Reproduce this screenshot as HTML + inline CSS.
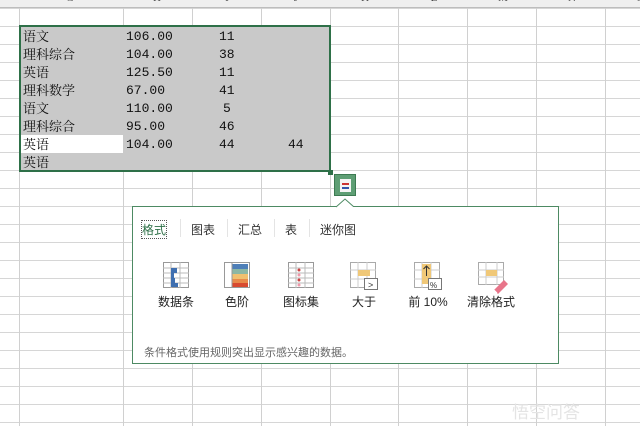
<!DOCTYPE html><html><head><meta charset="utf-8"><style>
*{margin:0;padding:0;box-sizing:border-box}
body{width:640px;height:426px;overflow:hidden;background:#fff;position:relative;font-family:"Liberation Sans","Noto Sans CJK SC",sans-serif}
.grid{position:absolute;left:0;top:8px;width:640px;height:418px;
background-image:linear-gradient(to bottom,#d6d6d6 1px,transparent 1px);background-size:100% 18px}
.v{position:absolute;top:0;width:1px;height:426px;background:#d0d0d0}
.hdr{position:absolute;left:0;top:0;width:640px;height:8px;background:#efefef;border-bottom:1px solid #bdbdbd;overflow:hidden}
.hdr span{position:absolute;top:-8px;font:11px "Liberation Serif",serif;color:#444;width:20px;text-align:center}
.sel{position:absolute;left:19px;top:25px;width:312px;height:147px;background:#c9c9c9;border:2px solid #2e7048}
.c{position:absolute;font:13px "Noto Serif CJK SC",serif;color:#111;height:18px;line-height:18px;margin-top:0}
.n{font:13px "Liberation Mono",monospace;margin-top:2px}
.pop{position:absolute;left:132px;top:206px;width:427px;height:158px;background:#fff;border:1px solid #4d8a63}
.t{position:absolute;top:14px;font-size:12px;color:#333}
.sep{position:absolute;top:12px;width:1px;height:18px;background:#e4e4e4}
.lb{position:absolute;top:86px;font-size:12px;color:#222;width:70px;text-align:center}
.ic{position:absolute;top:55px}
</style></head><body>
<div class="grid"></div>
<div class="v" style="left:19px"></div><div class="v" style="left:123px"></div><div class="v" style="left:192px"></div><div class="v" style="left:261px"></div><div class="v" style="left:330px"></div><div class="v" style="left:398px"></div><div class="v" style="left:467px"></div><div class="v" style="left:536px"></div><div class="v" style="left:605px"></div>
<div class="hdr"><span style="left:60px">G</span><span style="left:147px">H</span><span style="left:217px">I</span><span style="left:286px">J</span><span style="left:355px">K</span><span style="left:424px">L</span><span style="left:493px">M</span><span style="left:562px">N</span><span style="left:630px">O</span></div>
<div class="sel"></div>
<div style="position:absolute;left:21px;top:135px;width:102px;height:18px;background:#fff"></div>
<div style="position:absolute;left:328px;top:170px;width:5px;height:5px;background:#2e7048"></div>
<div class="c" style="left:23px;top:27px">语文</div><div class="c n" style="left:126px;top:27px">106.00</div><div class="c n" style="left:219px;top:27px">11</div>
<div class="c" style="left:23px;top:45px">理科综合</div><div class="c n" style="left:126px;top:45px">104.00</div><div class="c n" style="left:219px;top:45px">38</div>
<div class="c" style="left:23px;top:63px">英语</div><div class="c n" style="left:126px;top:63px">125.50</div><div class="c n" style="left:219px;top:63px">11</div>
<div class="c" style="left:23px;top:81px">理科数学</div><div class="c n" style="left:126px;top:81px">67.00</div><div class="c n" style="left:219px;top:81px">41</div>
<div class="c" style="left:23px;top:99px">语文</div><div class="c n" style="left:126px;top:99px">110.00</div><div class="c n" style="left:223px;top:99px">5</div>
<div class="c" style="left:23px;top:117px">理科综合</div><div class="c n" style="left:126px;top:117px">95.00</div><div class="c n" style="left:219px;top:117px">46</div>
<div class="c" style="left:23px;top:135px">英语</div><div class="c n" style="left:126px;top:135px">104.00</div><div class="c n" style="left:219px;top:135px">44</div><div class="c n" style="left:288px;top:135px">44</div>
<div class="c" style="left:23px;top:153px">英语</div>
<div style="position:absolute;left:334px;top:174px;width:22px;height:22px;background:#5e9e74;border:1px solid #3d7a52"><div style="position:absolute;left:5px;top:4px;width:11px;height:13px;background:#f4f4f4"></div><div style="position:absolute;left:7px;top:8px;width:7px;height:2px;background:#c33"></div><div style="position:absolute;left:7px;top:12px;width:7px;height:2px;background:#35a"></div></div>
<div class="pop">
<div class="t" style="left:9px;color:#2e7048;outline:1px dotted #555">格式</div>
<div class="sep" style="left:47px"></div><div class="t" style="left:58px">图表</div>
<div class="sep" style="left:94px"></div><div class="t" style="left:105px">汇总</div>
<div class="sep" style="left:141px"></div><div class="t" style="left:152px">表</div>
<div class="sep" style="left:176px"></div><div class="t" style="left:187px">迷你图</div>
<svg class="ic" style="left:30px" width="26" height="26"><rect x="0.5" y="0.5" width="25" height="25" fill="#fff" stroke="#999"/><path d="M0 6h26M0 11h26M0 16h26M0 21h26M8 0v26M17 0v26" stroke="#bbb"/><rect x="8" y="6" width="6" height="5" fill="#3f6fb0"/><rect x="8" y="16" width="4" height="5" fill="#3f6fb0"/><rect x="8" y="11" width="3" height="5" fill="#3f6fb0"/><rect x="8" y="21" width="7" height="4" fill="#3f6fb0"/></svg>
<svg class="ic" style="left:91px" width="26" height="26"><rect x="0.5" y="0.5" width="25" height="25" fill="#fff" stroke="#999"/><rect x="8" y="2" width="16" height="5" fill="#4e7fb8"/><rect x="8" y="7" width="16" height="5" fill="#8cb7a4"/><rect x="8" y="12" width="16" height="5" fill="#f0c070"/><rect x="8" y="17" width="16" height="4" fill="#e88a4a"/><rect x="8" y="21" width="16" height="4" fill="#d84a30"/><path d="M8 0v26" stroke="#999"/></svg>
<svg class="ic" style="left:155px" width="26" height="26"><rect x="0.5" y="0.5" width="25" height="25" fill="#fff" stroke="#999"/><path d="M0 6h26M0 11h26M0 16h26M0 21h26M8 0v26M17 0v26" stroke="#bbb"/><circle cx="11" cy="8" r="1.5" fill="#c44"/><circle cx="11" cy="13" r="1.5" fill="#e9a"/><circle cx="11" cy="18" r="1.5" fill="#c44"/><circle cx="11" cy="23" r="1.5" fill="#e9a"/></svg>
<svg class="ic" style="left:217px" width="30" height="30"><rect x="0.5" y="0.5" width="25" height="25" fill="#fff" stroke="#aaa"/><path d="M0 8h26M0 17h26M8 0v26M17 0v26" stroke="#ccc"/><rect x="8" y="8" width="12" height="6" fill="#f0c878"/><rect x="14.5" y="16.5" width="13" height="11" fill="#fff" stroke="#777"/><text x="18" y="26" font-size="9" fill="#333">&gt;</text></svg>
<svg class="ic" style="left:281px" width="30" height="30"><rect x="0.5" y="0.5" width="25" height="25" fill="#fff" stroke="#aaa"/><path d="M0 8h26M0 17h26M8 0v26M17 0v26" stroke="#ccc"/><rect x="8" y="2" width="9" height="20" fill="#f0c878"/><path d="M12.5 14V4M9.5 7l3-3 3 3" stroke="#333" fill="none"/><rect x="14.5" y="16.5" width="13" height="11" fill="#fff" stroke="#777"/><text x="16" y="26" font-size="8" fill="#333">%</text></svg>
<svg class="ic" style="left:345px" width="32" height="32"><rect x="0.5" y="0.5" width="25" height="22" fill="#fff" stroke="#aaa"/><path d="M0 8h26M0 15h26M8 0v23M19 0v23" stroke="#ccc"/><rect x="8" y="8" width="11" height="6" fill="#f0c878"/><path d="M16 28l10-10 4 4-10 10z" fill="#e8758a"/><path d="M16 28l3 3" stroke="#fff"/></svg>
<div class="lb" style="left:8px">数据条</div>
<div class="lb" style="left:69px">色阶</div>
<div class="lb" style="left:133px">图标集</div>
<div class="lb" style="left:196px">大于</div>
<div class="lb" style="left:260px">前 10%</div>
<div class="lb" style="left:323px">清除格式</div>
<div style="position:absolute;left:11px;top:137px;font-size:11px;color:#666">条件格式使用规则突出显示感兴趣的数据。</div>
</div>
<svg style="position:absolute;left:336px;top:198px" width="20" height="10"><path d="M0 9L9 1l9 8" fill="#fff" stroke="#4d8a63"/><path d="M1 10h17" stroke="#fff" stroke-width="2"/></svg>
<div style="position:absolute;left:512px;top:398px;font-size:17px;color:#e4e4e4">悟空问答</div>
</body></html>
